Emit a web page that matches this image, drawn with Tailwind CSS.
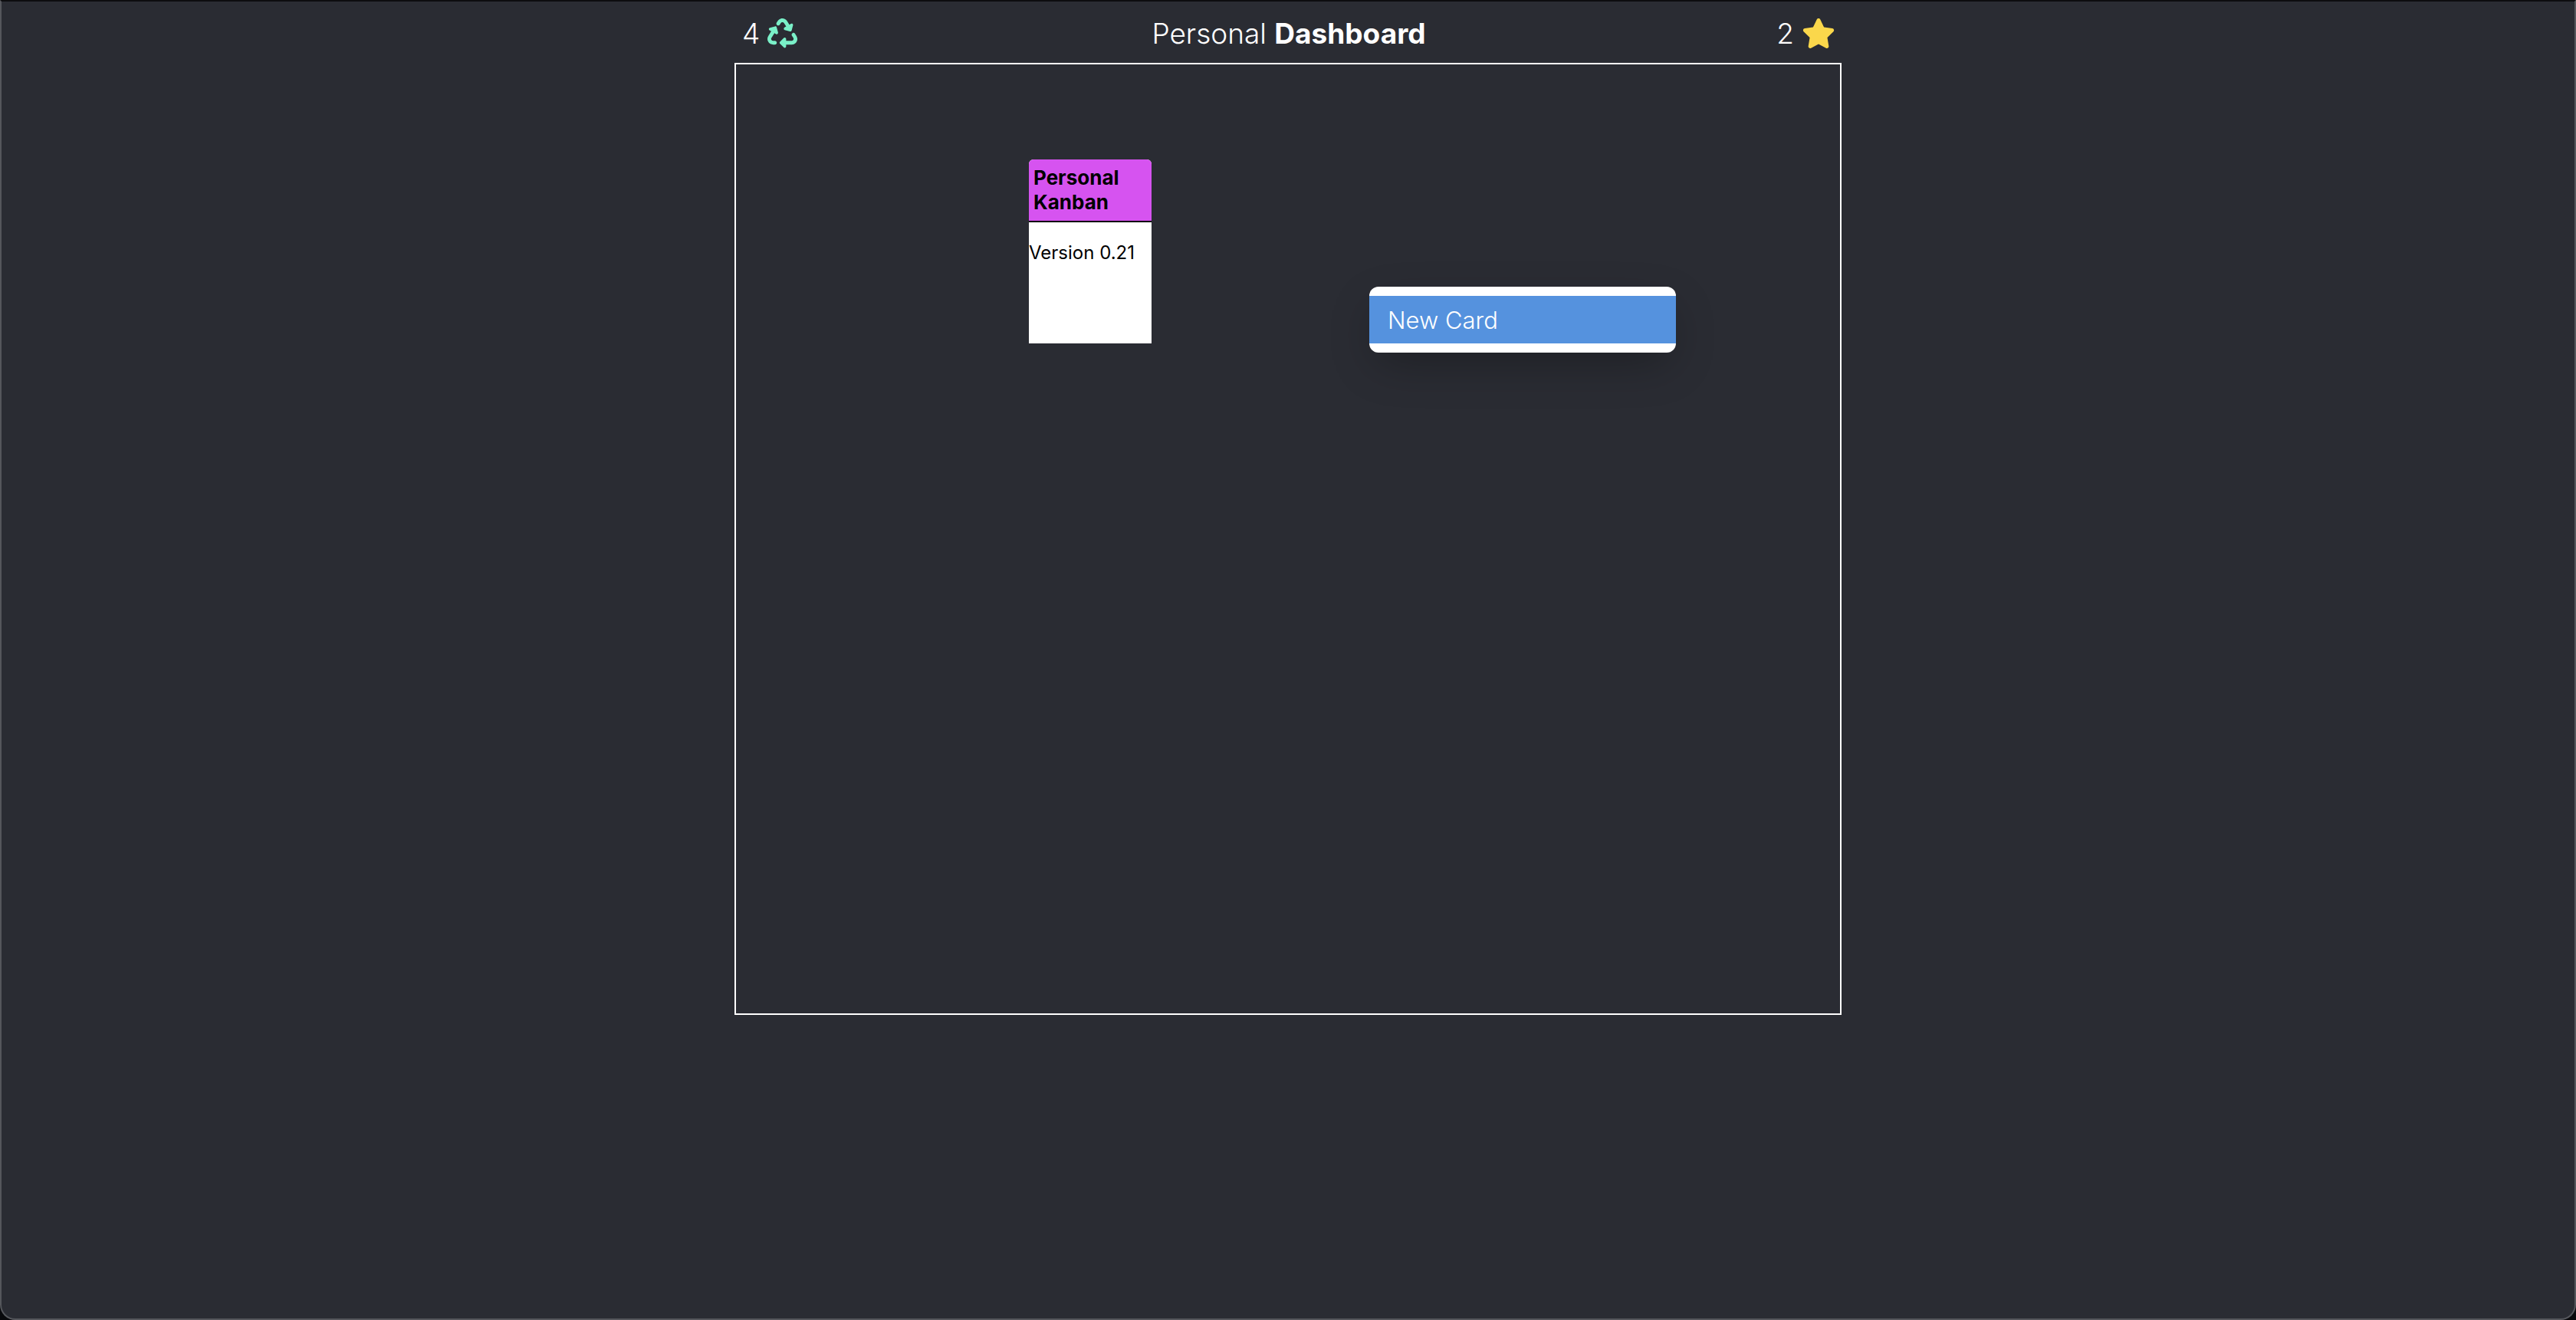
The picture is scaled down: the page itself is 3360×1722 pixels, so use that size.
<!DOCTYPE html>
<html lang="en">
<head>
<meta charset="utf-8">
<title>Personal Dashboard</title>
<script src="https://cdn.jsdelivr.net/npm/@tailwindcss/browser@4"></script>
</head>
<body class="bg-[#08090c] font-['Inter',sans-serif]">
<div class="flex min-h-screen flex-col rounded-b-[20px] border-2 border-[#55575c] border-t-[#0d0d0f] bg-[#2a2c33]">
  <div class="mx-auto w-full max-w-[1444px]">
    <header class="flex h-20 items-center justify-between pt-0.5 pr-2 pl-2.5 text-[37px] leading-none text-white">
      <div class="flex flex-1 items-center gap-2.5">
        <span class="font-light">4</span>
        <svg class="size-[39px] fill-[#7af0c8]" viewBox="0 0 512 512" role="img" aria-label="Recycled"><path d="M174.7 45.1C192.2 17 223 0 256 0s63.8 17 81.3 45.1l38.6 61.7 27-15.6c8.4-4.9 18.9-4.2 26.6 1.7s11.1 15.9 8.6 25.3l-23.4 87.4c-3.4 12.8-16.6 20.4-29.4 17l-87.4-23.4c-9.4-2.5-16.3-10.4-17.6-20s3.4-19.1 11.8-23.9l28.4-16.4L283 79c-5.8-9.3-16-15-27-15s-21.2 5.7-27 15l-17.5 28c-9.2 14.8-28.6 19.5-43.6 10.5c-15.3-9.2-20.2-29.2-10.7-44.4l17.5-28zM429.5 251.9c15-9 34.4-4.3 43.6 10.5l24.4 39.1c9.4 15.1 14.4 32.4 14.6 50.2c.3 53.1-42.7 96.4-95.8 96.4L320 448v32c0 9.7-5.8 18.5-14.8 22.2s-19.3 1.7-26.2-5.2l-64-64c-9.4-9.4-9.4-24.6 0-33.9l64-64c6.9-6.9 17.2-8.9 26.2-5.2s14.8 12.5 14.8 22.2v32l96.2 0c17.6 0 31.9-14.4 31.8-32c0-5.9-1.7-11.7-4.8-16.7l-24.4-39.1c-9.5-15.2-4.7-35.2 10.7-44.4zm-364.6-31L36 204.2c-8.4-4.9-13.1-14.3-11.8-23.9s8.2-17.5 17.6-20l87.4-23.4c12.8-3.4 26 4.2 29.4 17L182 241.2c2.5 9.4-.9 19.3-8.6 25.3s-18.2 6.6-26.6 1.7l-26.5-15.3L68.8 335.3c-3.1 5-4.8 10.8-4.8 16.7c-.1 17.6 14.2 32 31.8 32l32.2 0c17.7 0 32 14.3 32 32s-14.3 32-32 32l-32.2 0C42.7 448-.3 404.8 0 351.6c.1-17.8 5.1-35.1 14.6-50.2l50.3-80.5z"/></svg>
      </div>
      <h1 class="font-light">Personal <b class="font-bold">Dashboard</b></h1>
      <div class="flex flex-1 items-center justify-end gap-2.5">
        <span class="font-light">2</span>
        <svg class="h-[39px] w-11 fill-[#fad74b]" viewBox="0 0 576 512" role="img" aria-label="Starred"><path d="M316.9 18C311.6 7 300.4 0 288.1 0s-23.4 7-28.8 18L195 150.3 51.4 171.5c-12 1.8-22 10.2-25.7 21.7s-.7 24.2 7.9 32.7L137.8 329 113.2 474.7c-2 12 3 24.2 12.9 31.3s23 8 33.8 2.3l128.3-68.5 128.3 68.5c10.8 5.7 23.9 4.9 33.8-2.3s14.9-19.3 12.9-31.3L438.5 329 542.7 225.9c8.6-8.5 11.7-21.2 7.9-32.7s-13.7-19.9-25.7-21.7L381.2 150.3 316.9 18z"/></svg>
      </div>
    </header>
    <main class="relative min-h-[1242px] border-2 border-white">
      <!-- cards and the context menu sit freely on the board -->
      <article class="absolute left-[382px] top-[124px] min-h-60 w-40 rounded-t-md bg-white text-black">
        <h2 class="rounded-t-md border-b-2 border-black bg-[#d653f0] px-1.5 py-2 text-[26px] font-bold leading-8">Personal Kanban</h2>
        <p class="mt-6 text-2xl">Version 0.21</p>
      </article>
      <div role="menu" class="absolute left-[826px] top-[290px] w-[400px] rounded-xl bg-white py-3 shadow-[0_20px_60px_-10px_rgba(0,0,0,0.3)]">
        <button role="menuitem" type="button" class="block h-[62px] w-full bg-[#5592de] px-6 text-left text-[31px] font-light leading-none text-white">New Card</button>
      </div>
    </main>
  </div>
</div>
</body>
</html>
